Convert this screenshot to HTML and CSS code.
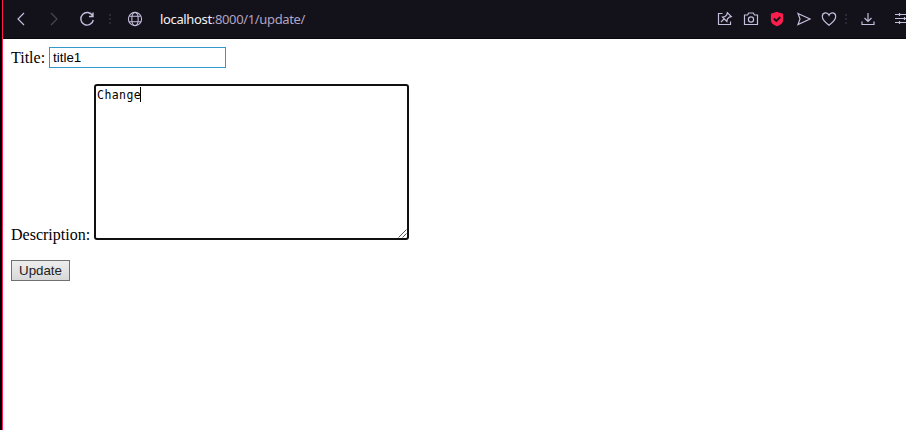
FILE: index.html
```html
<!DOCTYPE html>
<html lang="en">
<head>
<meta charset="utf-8">
<title>Update</title>
<link rel="stylesheet" href="styles.css">
</head>
<body>
<div class="window">
  <header class="toolbar">
    <svg class="icon back" viewBox="0 0 16 16"><path d="M11 2 5 8l6 6"/></svg>
    <svg class="icon forward" viewBox="0 0 16 16"><path d="m5 2 6 6-6 6"/></svg>
    <svg class="icon reload" viewBox="0 0 16 16"><path d="M13.600 4.700A6.300 6.300 0 1 0 14.300 9M14 1.500V5.500H10"/></svg>
    <span class="dots"><i></i><i></i><i></i></span>
    <svg class="icon globe" viewBox="0 0 16 16"><circle cx="8" cy="8" r="6.6"/><ellipse cx="8" cy="8" rx="3.2" ry="6.6"/><path d="M2.300 5.300h11.400M2.300 10.700h11.400"/></svg>
    <div class="address"><span class="host">localhost</span>:8000/1/update/</div>
    <svg class="icon pin" viewBox="0 0 16 16"><path d="M5.500 2.500h-4v11h12v-3M4 11l3.300-3.300M10.300 1.700l4 4-2 .4-2 2-.4 2.400L5.500 6.100l2.400-.4 2-2z"/></svg>
    <svg class="icon camera" viewBox="0 0 16 16"><path d="M1.500 4h3l1.200-2h4.600l1.200 2h3v9.500h-13z"/><circle cx="8" cy="8.500" r="2.600"/></svg>
    <svg class="icon shield" viewBox="0 0 16 16"><path class="shield-body" d="M8 1.500 13.500 3.300V9c0 3-2.700 4.700-5.500 5.600C5.200 13.700 2.500 12 2.500 9V3.300z"/><path class="tick" d="m4.800 7.500 2.500 2.500 4-4"/></svg>
    <svg class="icon send" viewBox="0 0 16 16"><path d="M2 2.500 14 8 2 13.500 4 8z"/></svg>
    <svg class="icon heart" viewBox="0 0 16 16"><path d="M8 14.200C5 12 1.300 8.500 1.300 5.500 1.300 1.300 6.500.700 8 4.200c1.500-3.500 6.700-2.900 6.700 1.300 0 3-3.700 6.500-6.700 8.700z"/></svg>
    <span class="dots dots-right"><i></i><i></i><i></i></span>
    <svg class="icon download" viewBox="0 0 16 16"><path d="M8 2v8.500M4.500 7 8 10.500 11.500 7M2 10.500v3h12v-3"/></svg>
    <svg class="icon settings" viewBox="0 0 16 16"><path d="M0 3.500h16M0 7.500h16M0 11.500h16M4.500 2v3M9.500 6v3M4.500 10v3"/></svg>
  </header>
  <form class="form">
    <div class="row title-row"><label for="title">Title:</label><input id="title" class="title" type="text" value="title1"></div>
    <div class="row description-row"><span class="description-label">Description:</span>
      <div class="editor">Change<span class="caret"></span>
        <svg class="grip" viewBox="0 0 9 9"><path d="M.5 8.500 8.500.5M4.500 8.500l4-4"/></svg>
      </div>
    </div>
    <button class="update" type="button">Update</button>
  </form>
</div>
</body>
</html>
```
FILE: styles.css
```css
* { box-sizing: border-box; }

body {
  margin: 0;
  background: #000;
  overflow: hidden;
}

.window {
  height: 430px;
  margin-left: 2px;
  border-left: 1px solid #fa1e4e;
  background: #fff;
}

.toolbar {
  display: flex;
  align-items: center;
  height: 39px;
  padding-left: 10px;
  background: #13111a;
  border-bottom: 1px solid #09070d;
  overflow: hidden;
}

.icon {
  flex: none;
  width: 16px;
  height: 16px;
  fill: none;
  stroke: #c4bddb;
  stroke-width: 1.2;
}

.forward { margin-left: 17px; stroke: #4a4654; }
.reload { margin-left: 17px; stroke-width: 1.4; }
.globe { margin-left: 16px; stroke-width: 1.1; }

.dots {
  display: flex;
  flex: none;
  flex-direction: column;
  gap: 2px;
  width: 2px;
  margin-left: 14px;
}

.dots i { height: 2px; background: #2b2933; }

.address {
  width: 557px;
  padding-left: 17px;
  flex: none;
  color: #afa5c5;
  font: 13px/20px "Noto Sans", "Open Sans", sans-serif;
  letter-spacing: -0.35px;
}

.host { color: #f4f2f8; }

.pin { margin-left: 17px; }
.camera, .shield { margin-left: 10px; }
.send { margin-left: 11px; }
.heart { margin-left: 9px; }
.dots-right { margin-left: 8px; }
.download { margin-left: 13px; }
.settings { margin-left: 19px; }

.shield-body { fill: #fa1e4e; stroke: #fa1e4e; }
.tick { stroke: #13111a; stroke-width: 1.8; }

.form {
  padding: 8px;
  color: #000;
  font: 16px/18px "Liberation Serif", serif;
}

.row { display: flex; }

.title-row { align-items: center; gap: 4px; height: 21px; }

.title {
  width: 177px;
  height: 21px;
  padding: 1px 3px;
  border: 1px solid #3399cc;
  border-radius: 0;
  font: 13.333px "Liberation Sans", sans-serif;
}

.description-row {
  align-items: flex-end;
  gap: 4px;
  margin-top: 16px;
}

.description-label { margin-bottom: -4px; }

.editor {
  position: relative;
  width: 315px;
  height: 156px;
  padding: 2px 1px;
  border: 2px solid #101010;
  border-radius: 3px;
  font: 11.5px/15px "DejaVu Sans Mono", monospace;
  letter-spacing: 0.4px;
}

.caret {
  display: inline-block;
  width: 1px;
  height: 15px;
  margin: -1px 0 0 -1px;
  background: #000;
  vertical-align: top;
}

.grip {
  position: absolute;
  right: 0;
  bottom: 0;
  width: 9px;
  height: 9px;
  fill: none;
  stroke: #555;
}

.update {
  display: block;
  width: 59px;
  height: 21px;
  margin-top: 20px;
  padding: 0;
  border: 1px solid #707070;
  border-radius: 0;
  background: linear-gradient(#eee, #d8d8d8);
  color: #222;
  font: 13.333px "Liberation Sans", sans-serif;
}
```
